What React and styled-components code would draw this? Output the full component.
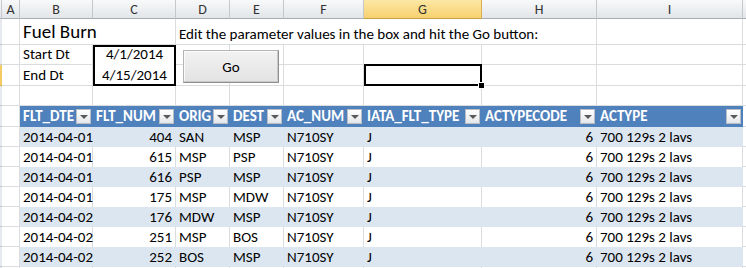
import React from 'react';
import styled, { createGlobalStyle, css } from 'styled-components';

const Global = createGlobalStyle`
  html, body { margin: 0; padding: 0; background: #fff; }
  body { font-family: Carlito, Lato, "Liberation Sans", sans-serif; overflow: hidden; }
`;

const Sheet = styled.div`
  position: relative;
  display: grid;
  grid-template-columns: 2px 18px 73px 83px 54px 54px 80px 118px 115px 146px 1fr;
  grid-template-rows: 19px 26px 20px 21px 20px 21px repeat(7, 20px) 1fr;
  width: 746px;
  height: 268px;
  overflow: hidden;
  font-size: 15px;
  color: #000;
`;

const ColHead = styled.div`
  box-sizing: border-box;
  display: flex;
  align-items: center;
  justify-content: center;
  font-size: 14px;
  color: #333;
  background: linear-gradient(#f8f9fa, #e2e5e9);
  border-right: 1px solid #c5c9ce;
  border-bottom: 1px solid #a8adb3;
  ${p => p.$selected && css`
    background: linear-gradient(#fce7a4, #f7d170);
    border-right-color: #d8ad4c;
    border-bottom-color: #c79e40;
  `}
`;

const RowHead = styled.div`
  box-sizing: border-box;
  background: #e6e9ed;
  border-bottom: 1px solid #c5c9ce;
  ${p => p.$selected && css`
    background: #f5cb66;
    border-bottom-color: #d8ad4c;
  `}
`;

const Cell = styled.div`
  box-sizing: border-box;
  position: relative;
  display: flex;
  align-items: flex-end;
  padding: 0 3px 1px;
  white-space: nowrap;
  border-right: 1px solid #dadcdd;
  border-bottom: 1px solid #dadcdd;
  grid-column: span ${p => p.$span || 1};
  justify-content: ${p => (p.$align === 'right' ? 'flex-end' : p.$align === 'center' ? 'center' : 'flex-start')};
  ${p => p.$boxTop && css`
    border: 2px solid #000;
    border-bottom: none;
    padding-bottom: 2px;
  `}
  ${p => p.$boxBottom && css`
    border: 2px solid #000;
    border-top: none;
    padding-bottom: 0;
  `}
  ${p => p.$active && css`
    z-index: 2;
    &::before {
      content: '';
      position: absolute;
      left: 0;
      top: -1px;
      right: -1px;
      bottom: -1px;
      border: 2px solid #000;
    }
    &::after {
      content: '';
      position: absolute;
      right: -3px;
      bottom: -3px;
      width: 5px;
      height: 5px;
      background: #000;
      outline: 1px solid #fff;
    }
  `}
`;

const Title = styled.span`
  font-size: 19px;
  line-height: 22px;
`;

const TableHeadCell = styled.div`
  box-sizing: border-box;
  display: flex;
  align-items: center;
  justify-content: space-between;
  padding: 0 2px 0 3px;
  background: #4f81bd;
  color: #fff;
  font-weight: 700;
  white-space: nowrap;
  border-bottom: 1px solid #4f81bd;
`;

const FilterBtn = styled.span`
  flex: none;
  width: 15px;
  height: 15px;
  box-sizing: border-box;
  border: 1px solid #b9bec4;
  background: linear-gradient(#ffffff, #e4e7ea);
  display: flex;
  align-items: center;
  justify-content: center;
  &::after {
    content: '';
    margin-top: 1px;
    border-left: 4px solid transparent;
    border-right: 4px solid transparent;
    border-top: 4px solid #5a5a5a;
  }
`;

const DataCell = styled.div`
  box-sizing: border-box;
  display: flex;
  align-items: flex-end;
  padding: 0 3px 1px;
  white-space: nowrap;
  justify-content: ${p => (p.$align === 'right' ? 'flex-end' : 'flex-start')};
  background: ${p => (p.$band ? '#dce6f1' : '#fff')};
  border-right: 1px solid ${p => (p.$band ? '#dce6f1' : '#dadcdd')};
`;

const GoButton = styled.button`
  position: absolute;
  left: 183px;
  top: 50px;
  width: 96px;
  height: 33px;
  box-sizing: border-box;
  border: 1px solid #b5b5b5;
  border-right-color: #8f8f8f;
  border-bottom-color: #8f8f8f;
  box-shadow: inset -1px -1px 0 #c9c9c9, inset 1px 1px 0 #fafafa;
  background: linear-gradient(#f2f2f2, #e3e3e3);
  font-family: inherit;
  font-size: 15px;
  color: #000;
  padding: 0;
  z-index: 3;
`;

const letters = ['A', 'B', 'C', 'D', 'E', 'F', 'G', 'H', 'I', ''];

const headers = ['FLT_DTE', 'FLT_NUM', 'ORIG', 'DEST', 'AC_NUM', 'IATA_FLT_TYPE', 'ACTYPECODE', 'ACTYPE'];
const aligns = ['left', 'right', 'left', 'left', 'left', 'left', 'right', 'left'];

const rows = [
  ['2014-04-01', '404', 'SAN', 'MSP'],
  ['2014-04-01', '615', 'MSP', 'PSP'],
  ['2014-04-01', '616', 'PSP', 'MSP'],
  ['2014-04-01', '175', 'MSP', 'MDW'],
  ['2014-04-02', '176', 'MDW', 'MSP'],
  ['2014-04-02', '251', 'MSP', 'BOS'],
  ['2014-04-02', '252', 'BOS', 'MSP'],
].map(r => [...r, 'N710SY', 'J', '6', '700 129s 2 lavs']);

function Empty({ n }) {
  return Array.from({ length: n }, (_, i) => <Cell key={i} />);
}

export default function App() {
  return (
    <>
      <Global />
      <Sheet>
        <ColHead />
        {letters.map((l, i) => (
          <ColHead key={i} $selected={l === 'G'}>{l}</ColHead>
        ))}

        <RowHead />
        <Cell />
        <Cell $span={2}><Title>Fuel Burn</Title></Cell>
        <Cell $span={5}>Edit the parameter values in the box and hit the Go button:</Cell>
        <Empty n={2} />

        <RowHead />
        <Cell />
        <Cell>Start Dt</Cell>
        <Cell $align="center" $boxTop>4/1/2014</Cell>
        <Empty n={7} />

        <RowHead $selected />
        <Cell />
        <Cell>End Dt</Cell>
        <Cell $align="center" $boxBottom>4/15/2014</Cell>
        <Empty n={3} />
        <Cell $active />
        <Empty n={3} />

        <RowHead />
        <Empty n={10} />

        <RowHead />
        <Cell />
        {headers.map(h => (
          <TableHeadCell key={h}>
            <span>{h}</span>
            <FilterBtn />
          </TableHeadCell>
        ))}
        <Cell />

        {rows.map((r, ri) => (
          <React.Fragment key={ri}>
            <RowHead />
            <Cell />
            {r.map((v, ci) => (
              <DataCell key={ci} $band={ri % 2 === 0} $align={aligns[ci]}>{v}</DataCell>
            ))}
            <Cell />
          </React.Fragment>
        ))}

        <RowHead />
        <Empty n={10} />

        <GoButton>Go</GoButton>
      </Sheet>
    </>
  );
}
